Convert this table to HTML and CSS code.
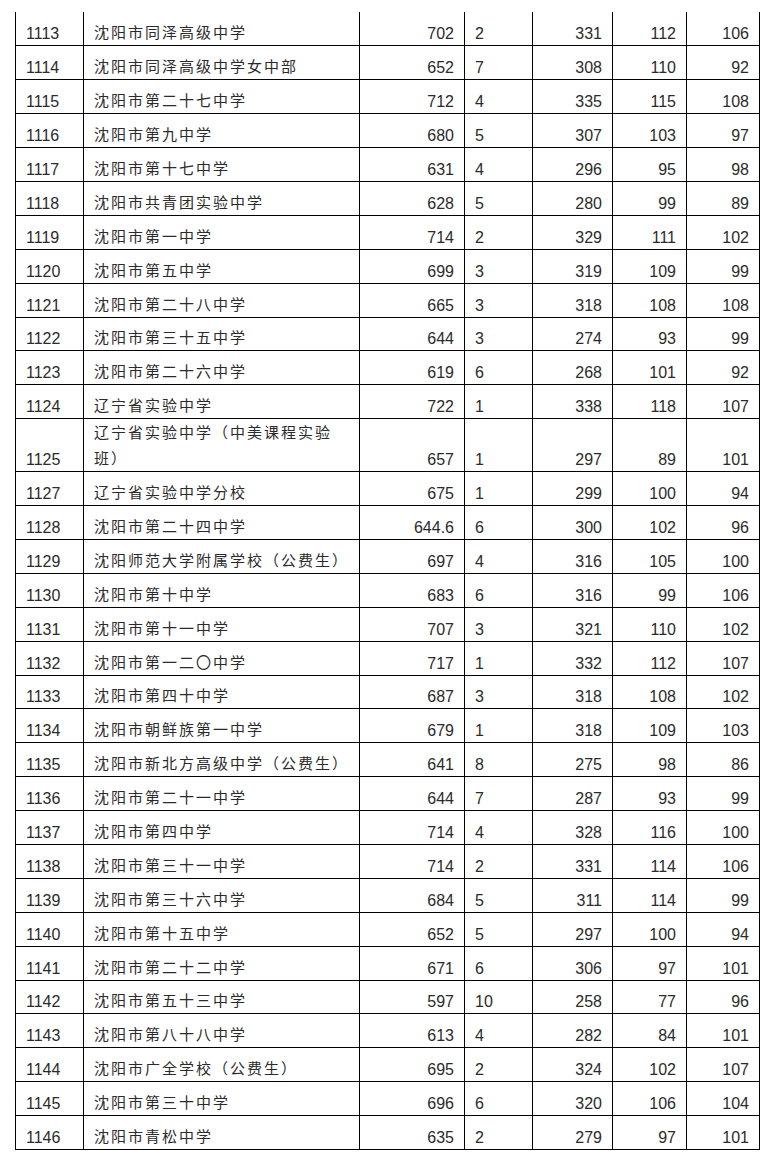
FILE: index.html
```html
<!DOCTYPE html>
<html lang="zh">
<head>
<meta charset="utf-8">
<link rel="stylesheet" href="styles.css">
</head>
<body>
<div class="wrap">
<table class="scores">
<colgroup>
<col class="c-id"><col class="c-name"><col class="c-score"><col class="c-rank"><col class="c-a"><col class="c-b"><col class="c-c">
</colgroup>
<tbody>
<tr><td>1113</td><td class="name">沈阳市同泽高级中学</td><td class="r">702</td><td>2</td><td class="r">331</td><td class="r">112</td><td class="r">106</td></tr>
<tr><td>1114</td><td class="name">沈阳市同泽高级中学女中部</td><td class="r">652</td><td>7</td><td class="r">308</td><td class="r">110</td><td class="r">92</td></tr>
<tr><td>1115</td><td class="name">沈阳市第二十七中学</td><td class="r">712</td><td>4</td><td class="r">335</td><td class="r">115</td><td class="r">108</td></tr>
<tr><td>1116</td><td class="name">沈阳市第九中学</td><td class="r">680</td><td>5</td><td class="r">307</td><td class="r">103</td><td class="r">97</td></tr>
<tr><td>1117</td><td class="name">沈阳市第十七中学</td><td class="r">631</td><td>4</td><td class="r">296</td><td class="r">95</td><td class="r">98</td></tr>
<tr><td>1118</td><td class="name">沈阳市共青团实验中学</td><td class="r">628</td><td>5</td><td class="r">280</td><td class="r">99</td><td class="r">89</td></tr>
<tr><td>1119</td><td class="name">沈阳市第一中学</td><td class="r">714</td><td>2</td><td class="r">329</td><td class="r">111</td><td class="r">102</td></tr>
<tr><td>1120</td><td class="name">沈阳市第五中学</td><td class="r">699</td><td>3</td><td class="r">319</td><td class="r">109</td><td class="r">99</td></tr>
<tr><td>1121</td><td class="name">沈阳市第二十八中学</td><td class="r">665</td><td>3</td><td class="r">318</td><td class="r">108</td><td class="r">108</td></tr>
<tr><td>1122</td><td class="name">沈阳市第三十五中学</td><td class="r">644</td><td>3</td><td class="r">274</td><td class="r">93</td><td class="r">99</td></tr>
<tr><td>1123</td><td class="name">沈阳市第二十六中学</td><td class="r">619</td><td>6</td><td class="r">268</td><td class="r">101</td><td class="r">92</td></tr>
<tr><td>1124</td><td class="name">辽宁省实验中学</td><td class="r">722</td><td>1</td><td class="r">338</td><td class="r">118</td><td class="r">107</td></tr>
<tr class="tall"><td>1125</td><td class="name">辽宁省实验中学（中美课程实验<br>班）</td><td class="r">657</td><td>1</td><td class="r">297</td><td class="r">89</td><td class="r">101</td></tr>
<tr><td>1127</td><td class="name">辽宁省实验中学分校</td><td class="r">675</td><td>1</td><td class="r">299</td><td class="r">100</td><td class="r">94</td></tr>
<tr><td>1128</td><td class="name">沈阳市第二十四中学</td><td class="r">644.6</td><td>6</td><td class="r">300</td><td class="r">102</td><td class="r">96</td></tr>
<tr><td>1129</td><td class="name">沈阳师范大学附属学校（公费生）</td><td class="r">697</td><td>4</td><td class="r">316</td><td class="r">105</td><td class="r">100</td></tr>
<tr><td>1130</td><td class="name">沈阳市第十中学</td><td class="r">683</td><td>6</td><td class="r">316</td><td class="r">99</td><td class="r">106</td></tr>
<tr><td>1131</td><td class="name">沈阳市第十一中学</td><td class="r">707</td><td>3</td><td class="r">321</td><td class="r">110</td><td class="r">102</td></tr>
<tr><td>1132</td><td class="name">沈阳市第一二〇中学</td><td class="r">717</td><td>1</td><td class="r">332</td><td class="r">112</td><td class="r">107</td></tr>
<tr><td>1133</td><td class="name">沈阳市第四十中学</td><td class="r">687</td><td>3</td><td class="r">318</td><td class="r">108</td><td class="r">102</td></tr>
<tr><td>1134</td><td class="name">沈阳市朝鲜族第一中学</td><td class="r">679</td><td>1</td><td class="r">318</td><td class="r">109</td><td class="r">103</td></tr>
<tr><td>1135</td><td class="name">沈阳市新北方高级中学（公费生）</td><td class="r">641</td><td>8</td><td class="r">275</td><td class="r">98</td><td class="r">86</td></tr>
<tr><td>1136</td><td class="name">沈阳市第二十一中学</td><td class="r">644</td><td>7</td><td class="r">287</td><td class="r">93</td><td class="r">99</td></tr>
<tr><td>1137</td><td class="name">沈阳市第四中学</td><td class="r">714</td><td>4</td><td class="r">328</td><td class="r">116</td><td class="r">100</td></tr>
<tr><td>1138</td><td class="name">沈阳市第三十一中学</td><td class="r">714</td><td>2</td><td class="r">331</td><td class="r">114</td><td class="r">106</td></tr>
<tr><td>1139</td><td class="name">沈阳市第三十六中学</td><td class="r">684</td><td>5</td><td class="r">311</td><td class="r">114</td><td class="r">99</td></tr>
<tr><td>1140</td><td class="name">沈阳市第十五中学</td><td class="r">652</td><td>5</td><td class="r">297</td><td class="r">100</td><td class="r">94</td></tr>
<tr><td>1141</td><td class="name">沈阳市第二十二中学</td><td class="r">671</td><td>6</td><td class="r">306</td><td class="r">97</td><td class="r">101</td></tr>
<tr><td>1142</td><td class="name">沈阳市第五十三中学</td><td class="r">597</td><td>10</td><td class="r">258</td><td class="r">77</td><td class="r">96</td></tr>
<tr><td>1143</td><td class="name">沈阳市第八十八中学</td><td class="r">613</td><td>4</td><td class="r">282</td><td class="r">84</td><td class="r">101</td></tr>
<tr><td>1144</td><td class="name">沈阳市广全学校（公费生）</td><td class="r">695</td><td>2</td><td class="r">324</td><td class="r">102</td><td class="r">107</td></tr>
<tr><td>1145</td><td class="name">沈阳市第三十中学</td><td class="r">696</td><td>6</td><td class="r">320</td><td class="r">106</td><td class="r">104</td></tr>
<tr><td>1146</td><td class="name">沈阳市青松中学</td><td class="r">635</td><td>2</td><td class="r">279</td><td class="r">97</td><td class="r">101</td></tr>
</tbody>
</table>
</div>
</body>
</html>
```

FILE: styles.css
```css
html, body {
  margin: 0;
  background: #ffffff;
}

.wrap {
  padding: 12px 0 0 15px;
}

.scores {
  border-collapse: collapse;
  table-layout: fixed;
  width: 745px;
  font-family: "Liberation Sans", Arial, sans-serif;
  font-size: 16px;
  color: #2b2b2b;
}

.c-id { width: 68px; }
.c-name { width: 276px; }
.c-score { width: 105px; }
.c-rank { width: 68px; }
.c-a { width: 80px; }
.c-b { width: 74px; }
.c-c { width: 73px; }

.scores td {
  border: 1px solid #000;
  height: 33.9px;
  padding: 0 10px 1px 10px;
  line-height: 20px;
  vertical-align: bottom;
  white-space: nowrap;
  box-sizing: border-box;
}

.scores tr:first-child td {
  border-top: none;
}

.scores td.r {
  text-align: right;
}

.scores td.name {
  font-family: "Noto Sans CJK SC", "Liberation Sans", sans-serif;
  font-size: 15px;
  letter-spacing: 2px;
  line-height: 26px;
  padding-bottom: 0;
}

.scores tr.tall td {
  height: 53px;
}
```
